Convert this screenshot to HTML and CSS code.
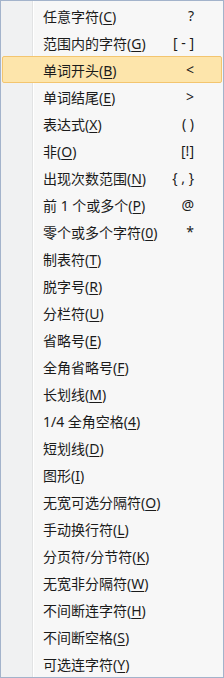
FILE: index.html
```html
<!DOCTYPE html>
<html lang="zh-CN">
<head>
  <meta charset="UTF-8">
  <meta name="viewport" content="width=device-width, initial-scale=1.0">
  <title>特殊字符</title>
  <link rel="stylesheet" href="styles.css">
</head>
<body>
  <div class="menu">
    <div class="item"><span class="label">任意字符(<u>C</u>)</span><span class="key">?</span></div>
    <div class="item"><span class="label">范围内的字符(<u>G</u>)</span><span class="key">[ - ]</span></div>
    <div class="item active"><span class="label">单词开头(<u>B</u>)</span><span class="key">&lt;</span></div>
    <div class="item"><span class="label">单词结尾(<u>E</u>)</span><span class="key">&gt;</span></div>
    <div class="item"><span class="label">表达式(<u>X</u>)</span><span class="key">( )</span></div>
    <div class="item"><span class="label">非(<u>O</u>)</span><span class="key">[!]</span></div>
    <div class="item"><span class="label">出现次数范围(<u>N</u>)</span><span class="key">{ , }</span></div>
    <div class="item"><span class="label">前 1 个或多个(<u>P</u>)</span><span class="key">@</span></div>
    <div class="item"><span class="label">零个或多个字符(<u>0</u>)</span><span class="key">*</span></div>
    <div class="item"><span class="label">制表符(<u>T</u>)</span></div>
    <div class="item"><span class="label">脱字号(<u>R</u>)</span></div>
    <div class="item"><span class="label">分栏符(<u>U</u>)</span></div>
    <div class="item"><span class="label">省略号(<u>E</u>)</span></div>
    <div class="item"><span class="label">全角省略号(<u>F</u>)</span></div>
    <div class="item"><span class="label">长划线(<u>M</u>)</span></div>
    <div class="item"><span class="label">1/4 全角空格(<u>4</u>)</span></div>
    <div class="item"><span class="label">短划线(<u>D</u>)</span></div>
    <div class="item"><span class="label">图形(<u>I</u>)</span></div>
    <div class="item"><span class="label">无宽可选分隔符(<u>O</u>)</span></div>
    <div class="item"><span class="label">手动换行符(<u>L</u>)</span></div>
    <div class="item"><span class="label">分页符/分节符(<u>K</u>)</span></div>
    <div class="item"><span class="label">无宽非分隔符(<u>W</u>)</span></div>
    <div class="item"><span class="label">不间断连字符(<u>H</u>)</span></div>
    <div class="item"><span class="label">不间断空格(<u>S</u>)</span></div>
    <div class="item"><span class="label">可选连字符(<u>Y</u>)</span></div>
  </div>
</body>
</html>
```

FILE: styles.css
```css
body {
  margin: 0;
  padding: 0;
  font-family: "Noto Sans", "Noto Sans CJK SC", sans-serif;
  font-size: 14px;
  color: #1b1b1b;
}
.menu {
  box-sizing: border-box;
  width: 224px;
  height: 678px;
  padding: 1px;
  border: 1px solid #a3b3cb;
  background: linear-gradient(to right, #f0f1f2 0, #f0f1f2 31px, #e2e3e4 31px, #e2e3e4 32px, #ffffff 32px, #ffffff 33px, #f7f7f7 33px);
  overflow: hidden;
}
.item {
  box-sizing: border-box;
  display: flex;
  align-items: center;
  height: 27px;
  padding: 0 27px 0 40px;
  border: 1px solid transparent;
  border-radius: 2px;
  white-space: nowrap;
}
.item.active {
  background-color: #fde5ab;
  border-color: #f3c56f;
}
.label {
  flex: 1;
}
.label u {
  text-underline-offset: 2px;
}
.key {
  text-align: right;
}
```
